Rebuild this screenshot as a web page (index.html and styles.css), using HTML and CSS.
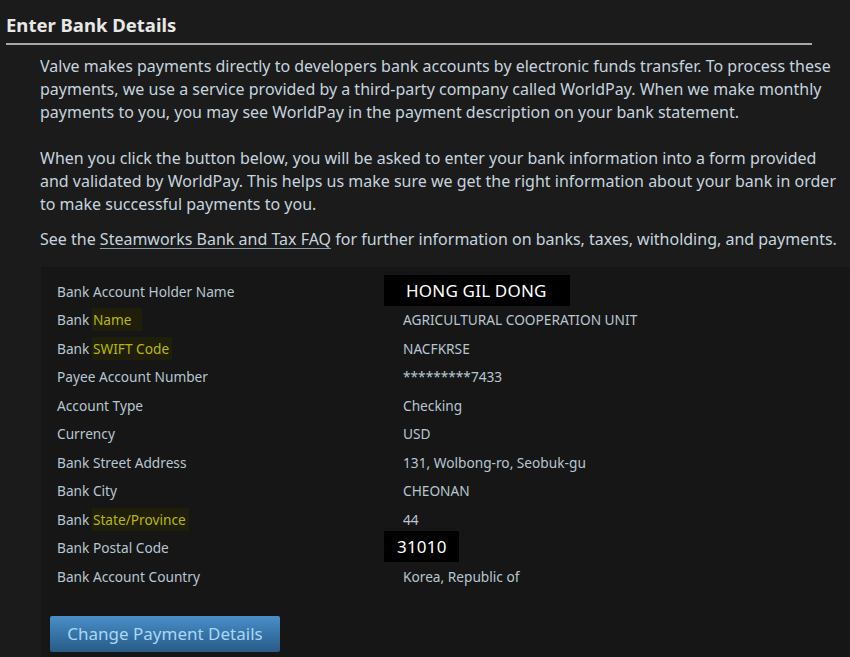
FILE: index.html
```html
<!DOCTYPE html>
<html>
<head>
<meta charset="utf-8">
<link rel="stylesheet" href="styles.css">
</head>
<body>
<div class="page">
  <h2 class="title">Enter Bank Details</h2>
  <div class="content">
    <p class="para">Valve makes payments directly to developers bank accounts by electronic funds transfer. To process these payments, we use a service provided by a third-party company called WorldPay. When we make monthly payments to you, you may see WorldPay in the payment description on your bank statement.</p>
    <p class="para">When you click the button below, you will be asked to enter your bank information into a form provided and validated by WorldPay. This helps us make sure we get the right information about your bank in order to make successful payments to you.</p>
    <p class="para faq">See the <a href="#" class="link">Steamworks Bank and Tax FAQ</a> for further information on banks, taxes, witholding, and payments.</p>
    <div class="panel">
      <div class="details">
        <div class="label">Bank Account Holder Name</div>
        <div class="value"><span class="redact redact-name">HONG GIL DONG</span></div>
        <div class="label">Bank <span class="hl hl-wide">Name</span></div>
        <div class="value">AGRICULTURAL COOPERATION UNIT</div>
        <div class="label">Bank <span class="hl">SWIFT Code</span></div>
        <div class="value">NACFKRSE</div>
        <div class="label">Payee Account Number</div>
        <div class="value">*********7433</div>
        <div class="label">Account Type</div>
        <div class="value">Checking</div>
        <div class="label">Currency</div>
        <div class="value">USD</div>
        <div class="label">Bank Street Address</div>
        <div class="value">131, Wolbong-ro, Seobuk-gu</div>
        <div class="label">Bank City</div>
        <div class="value">CHEONAN</div>
        <div class="label">Bank <span class="hl">State/Province</span></div>
        <div class="value">44</div>
        <div class="label">Bank Postal Code</div>
        <div class="value"><span class="redact redact-zip">31010</span></div>
        <div class="label">Bank Account Country</div>
        <div class="value">Korea, Republic of</div>
      </div>
      <button class="btn">Change Payment Details</button>
    </div>
  </div>
</div>
</body>
</html>
```
FILE: styles.css
```css
html, body {
  margin: 0;
  padding: 0;
  background: #1b1b1b;
}
body {
  font-family: "Noto Sans", "Open Sans", "DejaVu Sans", sans-serif;
  color: #c6d4df;
  width: 850px;
  height: 657px;
  overflow: hidden;
}
.page {
  padding: 11px 0 0 6px;
}
.title {
  margin: 0;
  width: 806px;
  font-size: 18.5px;
  font-weight: 700;
  color: #e8e8e8;
  line-height: 28px;
  padding-bottom: 4px;
  border-bottom: 2px solid #a8a8a8;
}
.content {
  padding: 10px 0 0 34px;
}
.para {
  margin: 0 0 23px 0;
  width: 800px;
  font-size: 16px;
  line-height: 23px;
  color: #c6d4df;
}
.faq {
  margin-bottom: 0;
  margin-top: -11px;
}
.link {
  color: #c6d4df;
  text-decoration: underline;
  text-decoration-color: #8a9aa6;
  text-underline-offset: 3px;
}
.panel {
  margin-top: 16px;
  margin-left: 1px;
  background: #161616;
  padding: 10px 0 10px 16px;
}
.details {
  display: grid;
  grid-template-columns: 346px 1fr;
  grid-auto-rows: 28.5px;
  align-items: center;
  font-size: 13.7px;
  color: #b8c6d1;
}
.hl {
  color: #b9b800;
  background: #1e1e0b;
  padding: 2px 3px 2px 1px;
  margin-left: -1px;
}
.hl-wide {
  padding-right: 10px;
}
.redact {
  display: inline-block;
  background: #000;
  color: #ffffff;
  font-size: 17px;
  height: 31px;
  line-height: 31px;
  margin-left: -19px;
  margin-top: -2px;
  letter-spacing: 0.2px;
}
.redact-name {
  padding: 0 23px 0 22px;
}
.redact-zip {
  padding: 0 12px 0 13px;
}
.btn {
  margin: 25px 0 0 -7px;
  display: block;
  width: 230px;
  height: 36px;
  border: none;
  border-radius: 2px;
  background: linear-gradient(to bottom, #4a90c8 0%, #3774a8 50%, #285b88 100%);
  color: #a9d8f5;
  font-family: "Noto Sans", "Open Sans", sans-serif;
  font-size: 17px;
  padding: 0;
  text-align: center;
}
```
